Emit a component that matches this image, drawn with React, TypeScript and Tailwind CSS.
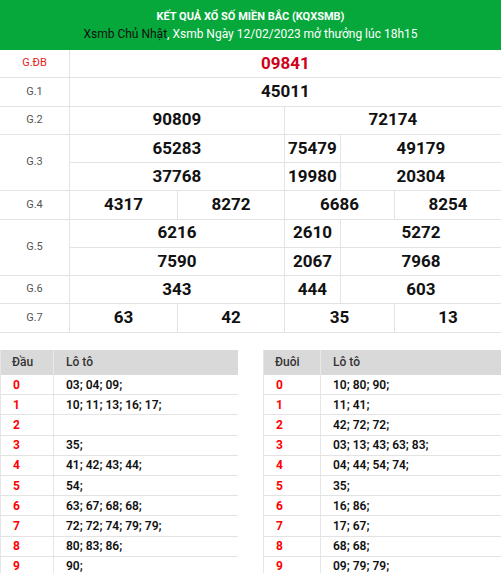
// XSMB result card: prize table on top, lô tô head/tail tables below.

type Cell = { value: string; width: string };

type PrizeRow = {
  label: string;
  special?: boolean;
  lines: Cell[][];
};

// column widths follow the table's auto layout in the source page
const HALF = "w-[214px]";
const NARROW = "w-[56px]";
const QUARTER = "w-[107px]";
const QUARTER_WIDE = "w-[110px]";

const threeCols = (a: string, b: string, c: string): Cell[] => [
  { value: a, width: HALF },
  { value: b, width: NARROW },
  { value: c, width: "flex-1" },
];

const fourCols = (a: string, b: string, c: string, d: string): Cell[] => [
  { value: a, width: QUARTER },
  { value: b, width: QUARTER },
  { value: c, width: QUARTER_WIDE },
  { value: d, width: "flex-1" },
];

const PRIZES: PrizeRow[] = [
  { label: "G.ĐB", special: true, lines: [[{ value: "09841", width: "flex-1" }]] },
  { label: "G.1", lines: [[{ value: "45011", width: "flex-1" }]] },
  {
    label: "G.2",
    lines: [
      [
        { value: "90809", width: HALF },
        { value: "72174", width: "flex-1" },
      ],
    ],
  },
  {
    label: "G.3",
    lines: [threeCols("65283", "75479", "49179"), threeCols("37768", "19980", "20304")],
  },
  { label: "G.4", lines: [fourCols("4317", "8272", "6686", "8254")] },
  {
    label: "G.5",
    lines: [threeCols("6216", "2610", "5272"), threeCols("7590", "2067", "7968")],
  },
  { label: "G.6", lines: [threeCols("343", "444", "603")] },
  { label: "G.7", lines: [fourCols("63", "42", "35", "13")] },
];

const HEADS: [string, string][] = [
  ["0", "03; 04; 09;"],
  ["1", "10; 11; 13; 16; 17;"],
  ["2", ""],
  ["3", "35;"],
  ["4", "41; 42; 43; 44;"],
  ["5", "54;"],
  ["6", "63; 67; 68; 68;"],
  ["7", "72; 72; 74; 79; 79;"],
  ["8", "80; 83; 86;"],
  ["9", "90;"],
];

const TAILS: [string, string][] = [
  ["0", "10; 80; 90;"],
  ["1", "11; 41;"],
  ["2", "42; 72; 72;"],
  ["3", "03; 13; 43; 63; 83;"],
  ["4", "04; 44; 54; 74;"],
  ["5", "35;"],
  ["6", "16; 86;"],
  ["7", "17; 67;"],
  ["8", "68; 68;"],
  ["9", "09; 79; 79;"],
];

function LotoTable({
  title,
  firstCol,
  rows,
}: {
  title: string;
  firstCol: string;
  rows: [string, string][];
}) {
  return (
    <div className="w-[238px] border-l border-[#e6e6e6] text-[12px]">
      <div className="flex h-[25.5px] items-center bg-[#d9d9d9] font-medium text-[#333]">
        <div className={`${firstCol} flex h-full items-center border-r border-[#e9e9e9] pl-[11px]`}>
          {title}
        </div>
        <div className="pl-[12px]">Lô tô</div>
      </div>
      {rows.map(([digit, nums]) => (
        <div
          key={digit}
          className="flex h-[20.2px] items-center border-b border-[#e3e3e3]"
        >
          <div
            className={`${firstCol} flex h-full items-center border-r border-[#e6e6e6] pl-[12px] font-bold text-[#f00]`}
          >
            {digit}
          </div>
          <div className="pl-[12px] font-semibold text-[#111]">{nums}</div>
        </div>
      ))}
    </div>
  );
}

export default function App() {
  return (
    <div className="w-[501px] bg-white font-['Roboto',sans-serif]">
      <div className="flex h-[50px] flex-col items-center justify-center bg-[#06a83b] text-center">
        <div className="text-[11px] font-bold leading-[15px] text-white">
          KẾT QUẢ XỔ SỐ MIỀN BẮC (KQXSMB)
        </div>
        <div className="mt-[3px] text-[12px] leading-[15px] text-white">
          <span className="text-[#111]">Xsmb Chủ Nhật</span>, Xsmb Ngày 12/02/2023 mở thưởng lúc 18h15
        </div>
      </div>

      <div>
        {PRIZES.map((prize) => (
          <div key={prize.label} className="flex">
            <div
              className={`flex w-[70px] shrink-0 items-center justify-center border-r border-b border-[#e3e3e3] text-[11px] ${
                prize.special ? "text-[#e2231a]" : "text-[#555]"
              }`}
            >
              {prize.label}
            </div>
            <div className="flex flex-1 flex-col">
              {prize.lines.map((line, i) => (
                <div key={i} className="flex h-[28.25px] border-b border-[#e3e3e3]">
                  {line.map((cell, j) => (
                    <div
                      key={j}
                      className={`${cell.width} flex items-center justify-center text-[17px] font-bold ${
                        j > 0 ? "border-l border-[#e3e3e3]" : ""
                      } ${prize.special ? "text-[#d0021b]" : "text-[#111]"}`}
                    >
                      {cell.value}
                    </div>
                  ))}
                </div>
              ))}
            </div>
          </div>
        ))}
      </div>

      <div className="mt-[17px] flex justify-between">
        <LotoTable title="Đầu" firstCol="w-[53px]" rows={HEADS} />
        <LotoTable title="Đuôi" firstCol="w-[57px]" rows={TAILS} />
      </div>
    </div>
  );
}
